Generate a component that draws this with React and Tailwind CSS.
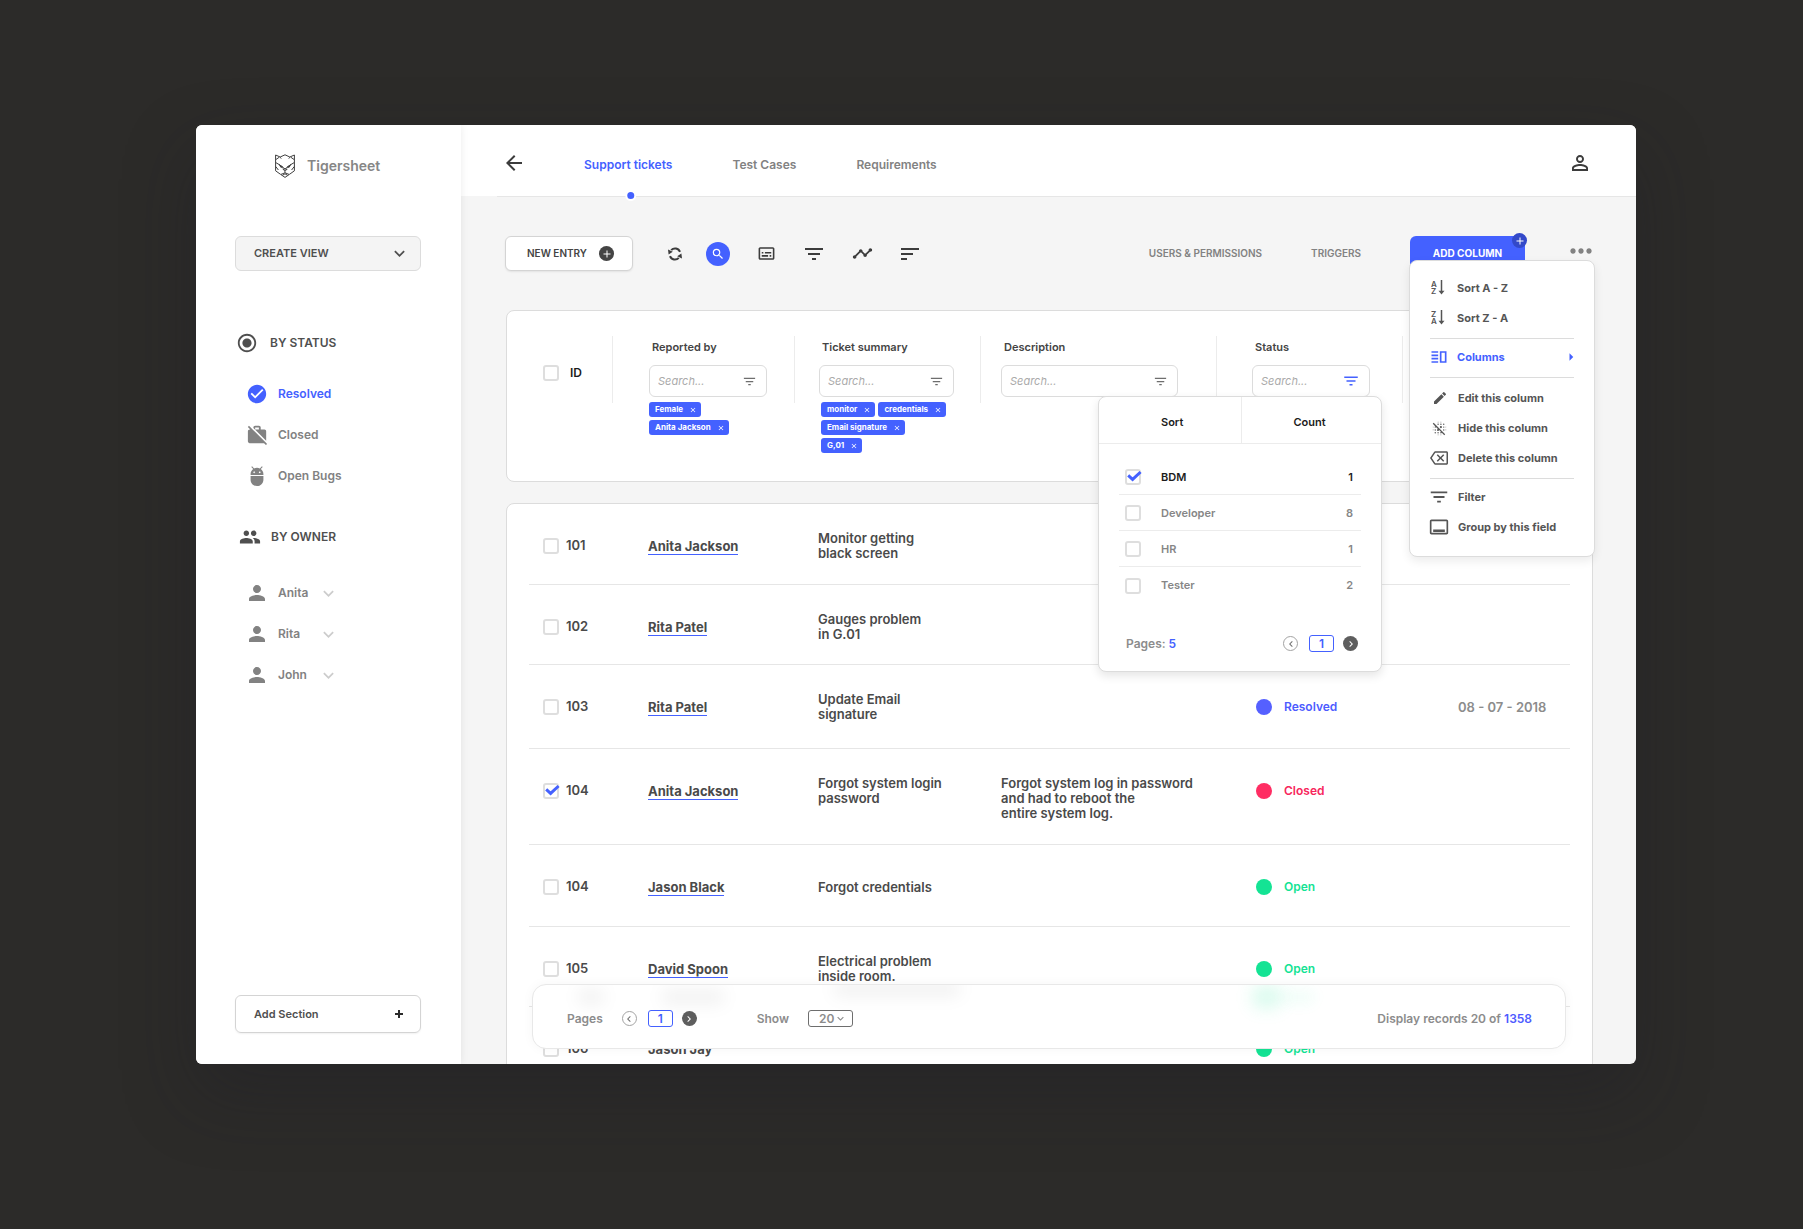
import React, { useState } from 'react';
import {
  MdAdb,
  MdAdd,
  MdArrowBack,
  MdArrowRight,
  MdBlurOff,
  MdCheckCircle,
  MdChevronLeft,
  MdChevronRight,
  MdClose,
  MdEdit,
  MdExpandMore,
  MdFilterList,
  MdGroup,
  MdMoreHoriz,
  MdOutlineBackspace,
  MdOutlineCallToAction,
  MdOutlineSubtitles,
  MdOutlineVerticalSplit,
  MdPerson,
  MdPersonOutline,
  MdRadioButtonChecked,
  MdSearch,
  MdSort,
  MdTimeline,
  MdWorkOff,
} from 'react-icons/md';

const statusLinks = [
  { label: 'Resolved', Icon: MdCheckCircle, active: true },
  { label: 'Closed', Icon: MdWorkOff },
  { label: 'Open Bugs', Icon: MdAdb },
];

const owners = ['Anita', 'Rita', 'John'];

const tabs = ['Support tickets', 'Test Cases', 'Requirements'];

const tools = [
  { label: 'Comments', Icon: MdOutlineSubtitles, size: 'size-[19px]' },
  { label: 'Filter', Icon: MdFilterList, size: 'size-6' },
  { label: 'Chart', Icon: MdTimeline, size: 'size-[21px]' },
  { label: 'Sort', Icon: MdSort, size: 'size-6' },
];

const statusStyles = {
  Resolved: { dot: 'bg-[#5560ff]', text: 'text-[#4d5bff]' },
  Closed: { dot: 'bg-[#ff2d63]', text: 'text-[#f7265c]' },
  Open: { dot: 'bg-[#14e394]', text: 'text-[#14e394]' },
};

const tickets = [
  { key: 1, id: '101', name: 'Anita Jackson', summary: ['Monitor getting', 'black screen'], height: 'h-[80px]' },
  { key: 2, id: '102', name: 'Rita Patel', summary: ['Gauges problem', 'in G.01'], height: 'h-[80px]' },
  { key: 3, id: '103', name: 'Rita Patel', summary: ['Update Email', 'signature'], status: 'Resolved', date: '08 - 07 - 2018', height: 'h-[84px]' },
  {
    key: 4,
    id: '104',
    name: 'Anita Jackson',
    summary: ['Forgot system login', 'password'],
    description: ['Forgot system log in password', 'and had to reboot the', 'entire system log.'],
    status: 'Closed',
    checked: true,
    height: 'h-[96px]',
  },
  { key: 5, id: '104', name: 'Jason Black', summary: ['Forgot credentials'], status: 'Open', height: 'h-[82px]' },
  { key: 6, id: '105', name: 'David Spoon', summary: ['Electrical problem', 'inside room.'], status: 'Open', height: 'h-[80px]' },
  { key: 7, id: '106', name: 'Jason Jay', plain: true, summary: [], status: 'Open', height: 'h-[80px]' },
];

const roles = [
  { label: 'BDM', count: 1, checked: true },
  { label: 'Developer', count: 8 },
  { label: 'HR', count: 1 },
  { label: 'Tester', count: 2 },
];

const TigerLogo = () => (
  <svg viewBox="0 0 20 24" className="h-6 w-5" fill="none" stroke="#3f3f3f" strokeWidth="1" strokeLinejoin="round" aria-hidden="true">
    <path d="M.6 1v15.8l5 3.6L10 23.4l4.4-3 5-3.6V1l-4.6 2L10 .8 5.2 3z" />
    <path d="M.8 5.6 4 3.4M19.2 5.6 16 3.4M4.8 3l1.4 1.6M15.2 3l-1.4 1.6" />
    <path d="m.8 8.6 3.4 2 3.8 2.6 2 2 2-2 3.8-2.6 3.4-2" />
    <path d="m4.4 10.6 3.2 2.6H5.8zM15.6 10.6l-3.2 2.6h1.8z" fill="#3f3f3f" />
    <path d="M.8 12.6 3.4 16M19.2 12.6 16.6 16" />
    <path d="M7.8 15h4.4L10 17.2zM10 17.2v1.6l-4 1.6M10 18.8l4 1.6" />
    <path d="M7.6 21.2 10 19.8l2.4 1.4" />
  </svg>
);

const SyncIcon = () => (
  <svg viewBox="0 0 16 16" className="size-4" fill="none" stroke="currentColor" strokeWidth="2" aria-hidden="true">
    <path d="M4.2 4.2A5.2 5.2 0 0 1 13 5.8M11.8 11.8A5.2 5.2 0 0 1 3 10.2" />
    <path d="M1 3.6 5.8 5.8 1.6 8.6zM15 12.4 10.2 10.2 14.4 7.4z" fill="currentColor" stroke="none" />
  </svg>
);

const SortLettersIcon = ({ first, second }) => (
  <svg viewBox="0 0 16 16" className="size-4" aria-hidden="true">
    <text x="0" y="7" fontSize="8" fontWeight="600" fill="currentColor">{first}</text>
    <text x="0" y="14" fontSize="8" fontWeight="600" fill="currentColor">{second}</text>
    <path d="M10.5 0v12" stroke="currentColor" strokeWidth="1.5" />
    <path d="M7.5 10.8h6l-3 3.8z" fill="currentColor" />
  </svg>
);

const Checkbox = ({ label, defaultChecked = false }) => (
  <span className="relative inline-flex size-4 shrink-0">
    <input
      type="checkbox"
      aria-label={label}
      defaultChecked={defaultChecked}
      className="peer size-4 appearance-none rounded-[3px] border-2 border-[#dedede] bg-white"
    />
    <svg viewBox="0 0 16 16" className="pointer-events-none absolute inset-0 hidden size-4 overflow-visible peer-checked:block" fill="none" stroke="#4461ff" strokeWidth="3" aria-hidden="true">
      <path d="m3.2 6.4 4.4 4 8-7.4" />
    </svg>
  </span>
);

const FilterChip = ({ children }) => (
  <span className="flex h-[15px] items-center gap-[6px] rounded-[3px] bg-[#4461ff] pl-[6px] pr-1 text-[8px] leading-[15px] font-bold text-white">
    {children}
    <button type="button" aria-label={`Remove ${children}`}>
      <MdClose className="size-2" />
    </button>
  </span>
);

const SearchBox = ({ id, active }) => (
  <div className="flex h-8 items-center rounded-md border border-[#dcdcdc] bg-white pl-2 pr-[9px]">
    <input
      id={id}
      type="text"
      placeholder="Search..."
      className="w-full min-w-0 flex-1 text-[11px] italic outline-none placeholder:text-[#aaaaaa]"
    />
    <button type="button" aria-label="Filter options" className={active ? 'text-[#4461ff]' : 'text-[#6e6e6e]'}>
      <MdFilterList className={active ? 'size-[18px]' : 'size-[15px]'} />
    </button>
  </div>
);

const HeaderColumn = ({ id, title, className, active, chips, children }) => (
  <div className="flex min-w-0">
    <div className="h-[67px] w-px shrink-0 bg-[#ececec]" />
    <div className={`relative min-w-0 flex-1 pt-[3px] ${className}`}>
      <label htmlFor={id} className="mb-[10px] block pl-[3px] text-[11px] leading-4 font-semibold text-[#444444]">{title}</label>
      <SearchBox id={id} active={active} />
      {chips}
      {children}
    </div>
  </div>
);

const Pager = () => (
  <div className="flex items-center">
    <button type="button" aria-label="Previous page" className="flex size-[15px] items-center justify-center rounded-full border border-[#a3a3a3] text-[#6e6e6e]">
      <MdChevronLeft className="size-3" />
    </button>
    <button type="button" className="mr-[9px] ml-[11px] h-[17px] w-[25px] rounded-[3px] border border-[#4461ff] text-[12px] leading-[15px] font-semibold text-[#4461ff]">1</button>
    <button type="button" aria-label="Next page" className="flex size-[15px] items-center justify-center rounded-full bg-[#5e5e5e] text-white">
      <MdChevronRight className="size-3" />
    </button>
  </div>
);

const Sidebar = () => (
  <aside className="z-10 flex w-[265px] shrink-0 flex-col bg-white pr-10 pl-[39px] shadow-[0_0_8px_rgba(0,0,0,0.08)]">
    <div className="mt-[29px] flex items-center gap-3 pl-10">
      <TigerLogo />
      <span className="text-[14px] leading-[22px] font-semibold text-[#868686]">Tigersheet</span>
    </div>

    <button type="button" className="mt-[58px] flex h-[35px] w-full items-center justify-between rounded-md border border-[#dcdcdc] bg-[#f4f4f4] pr-[10px] pl-[18px] text-[11px] font-semibold text-[#4f4f4f]">
      CREATE VIEW
      <MdExpandMore className="size-[21px]" />
    </button>

    <h2 className="mt-[60px] flex h-6 items-center gap-3 pl-[1px] text-[12px] font-semibold text-[#4f4f4f]">
      <MdRadioButtonChecked className="size-[22px]" />
      BY STATUS
    </h2>
    <ul className="mt-[29px] space-y-[21px] pl-[11px]">
      {statusLinks.map(({ label, Icon, active }) => (
        <li key={label}>
          <a href="#" className={`flex h-5 items-center gap-[10px] text-[12px] font-semibold ${active ? 'text-[#4461ff]' : 'text-[#828282]'}`}>
            <Icon className="size-[22px]" />
            {label}
          </a>
        </li>
      ))}
    </ul>

    <h2 className="mt-[39px] flex h-6 items-center gap-[10px] pl-1 text-[12px] font-semibold text-[#4f4f4f]">
      <MdGroup className="size-[22px]" />
      BY OWNER
    </h2>
    <ul className="mt-[34px] space-y-[21px] pl-[10px]">
      {owners.map((owner) => (
        <li key={owner}>
          <a href="#" className="flex h-5 items-center gap-[9px] text-[12px] font-semibold text-[#828282]">
            <MdPerson className="size-6" />
            <span className="w-[31px]">{owner}</span>
            <MdExpandMore className="size-[21px] text-[#cccccc]" />
          </a>
        </li>
      ))}
    </ul>

    <button type="button" className="mt-auto mb-[31px] flex h-[38px] w-full items-center justify-between rounded-md border border-[#d4d4d4] pr-[14px] pl-[18px] text-[11px] font-semibold text-[#4f4f4f] shadow-[0_1px_2px_rgba(0,0,0,0.06)]">
      Add Section
      <svg viewBox="0 0 14 14" className="size-[14px]" stroke="#2b2b2b" strokeWidth="2" aria-hidden="true">
        <path d="M7 3v8M3 7h8" />
      </svg>
    </button>
  </aside>
);

const ColumnMenu = () => {
  const item = 'flex h-[30px] w-full items-center gap-[10px] pl-px text-[11px] font-bold';
  return (
    <div className="absolute top-6 -left-px w-[186px] rounded-lg border border-[#dcdcdc] bg-white px-5 pt-3 pb-[14px] text-[#555555] shadow-[0_4px_10px_rgba(0,0,0,0.08)]">
      <button type="button" className={item}><SortLettersIcon first="A" second="Z" />Sort A - Z</button>
      <button type="button" className={item}><SortLettersIcon first="Z" second="A" />Sort Z - A</button>
      <hr className="mt-[5px] mb-[3px] border-[#dcdcdc]" />
      <button type="button" className={`${item} text-[#4461ff]`}>
        <MdOutlineVerticalSplit className="-mx-0.5 size-5" />
        Columns
        <MdArrowRight className="-mr-[6px] ml-auto size-[18px]" />
      </button>
      <hr className="my-[5px] border-[#dcdcdc]" />
      <button type="button" className={item}><MdEdit className="ml-px size-4" />Edit this column</button>
      <button type="button" className={item}><MdBlurOff className="size-[17px]" />Hide this column</button>
      <button type="button" className={item}><MdOutlineBackspace className="-ml-px size-[18px]" />Delete this column</button>
      <hr className="mt-[5px] mb-[3px] border-[#dcdcdc]" />
      <button type="button" className={item}><MdFilterList className="-mr-[2px] -ml-[3px] size-[22px]" />Filter</button>
      <button type="button" className={item}><MdOutlineCallToAction className="-mr-px -ml-[2px] size-5" />Group by this field</button>
    </div>
  );
};

const Toolbar = () => (
  <div className="relative z-20 flex h-[35px] items-center text-[#3c3c3c]">
    <button type="button" className="-ml-px flex h-[35px] items-center gap-3 rounded-md border border-[#d4d4d4] bg-white pr-[18px] pl-[21px] text-[10px] font-semibold text-[#444444] shadow-[0_1px_2px_rgba(0,0,0,0.08)]">
      NEW ENTRY
      <span className="flex size-[15px] items-center justify-center rounded-full bg-[#444444] text-white">
        <MdAdd className="size-3" />
      </span>
    </button>
    <button type="button" aria-label="Refresh" className="ml-[30px] flex size-6 items-center justify-center"><SyncIcon /></button>
    <div className="ml-[19px] flex items-center gap-6">
      <button type="button" aria-label="Search" className="flex size-6 items-center justify-center rounded-full bg-[#4461ff] text-white">
        <MdSearch className="size-[14px]" />
      </button>
      {tools.map(({ label, Icon, size }) => (
        <button key={label} type="button" aria-label={label} className="flex size-6 items-center justify-center">
          <Icon className={size} />
        </button>
      ))}
    </div>

    <div className="ml-auto flex items-center text-[10px] font-semibold text-[#828282]">
      <a href="#" className="mr-[49px]">USERS &amp; PERMISSIONS</a>
      <a href="#" className="mr-[49px]">TRIGGERS</a>
      <div className="relative">
        <button type="button" className="h-[35px] w-[115px] rounded-md bg-[#4461ff] font-bold text-white">ADD COLUMN</button>
        <span className="absolute -top-[3px] -right-[2px] flex size-[15px] items-center justify-center rounded-full bg-[#3349c9] text-white">
          <MdAdd className="size-3" />
        </span>
        <ColumnMenu />
      </div>
      <button type="button" aria-label="More" className="-mr-1 mb-[6px] ml-10"><MdMoreHoriz className="size-8" /></button>
    </div>
  </div>
);

const StatusPopover = () => (
  <div className="absolute top-[60px] right-5 w-[284px] rounded-lg border border-[#dcdcdc] bg-white text-[11px] font-semibold shadow-[0_4px_10px_rgba(0,0,0,0.1)]">
    <div className="flex h-[47px] border-b border-[#ececec] leading-[50px] text-[#1c1c1c]">
      <div className="w-[143px] border-r border-[#ececec] pl-[62px]">Sort</div>
      <div className="flex-1 pr-1 text-center">Count</div>
    </div>
    <ul className="mt-[15px] px-5">
      {roles.map((role) => (
        <li key={role.label} className={`flex h-9 items-center border-b border-[#ececec] pt-px pr-2 pl-[6px] last:border-0 ${role.checked ? 'text-[#1c1c1c]' : 'text-[#868686]'}`}>
          <Checkbox label={role.label} defaultChecked={role.checked} />
          <span className="ml-5 flex-1">{role.label}</span>
          <span>{role.count}</span>
        </li>
      ))}
    </ul>
    <div className="flex items-center justify-between pt-8 pr-[23px] pb-[19px] pl-[27px] text-[12px] leading-[17px] text-[#8c8c8c]">
      <span>Pages: <span className="text-[#4461ff]">5</span></span>
      <Pager />
    </div>
  </div>
);

const FilterHeader = () => (
  <section className="relative z-10 mt-[39px] grid grid-cols-[105fr_182fr_186fr_236fr_186fr_190fr] rounded-lg border border-[#dcdcdc] bg-white pt-[25px] pb-7">
    <div className="flex h-[67px] items-center gap-[11px] pt-[6px] pl-9 text-[12px] font-semibold text-[#1c1c1c]">
      <Checkbox label="Select all" />
      ID
    </div>
    <HeaderColumn
      id="reported"
      title="Reported by"
      className="pr-[27px] pl-9"
      chips={
        <div className="mt-[5px] flex flex-col items-start gap-[3px]">
          <FilterChip>Female</FilterChip>
          <FilterChip>Anita Jackson</FilterChip>
        </div>
      }
    />
    <HeaderColumn
      id="summary"
      title="Ticket summary"
      className="pr-[26px] pl-6"
      chips={
        <div className="mt-[5px] flex flex-col items-start gap-[3px] pl-[2px] whitespace-nowrap">
          <div className="flex gap-[3px]">
            <FilterChip>monitor</FilterChip>
            <FilterChip>credentials</FilterChip>
          </div>
          <FilterChip>Email signature</FilterChip>
          <FilterChip>G,01</FilterChip>
        </div>
      }
    />
    <HeaderColumn id="description" title="Description" className="pr-[38px] pl-5" />
    <HeaderColumn id="status" title="Status" className="pr-8 pl-[35px]" active>
      <StatusPopover />
    </HeaderColumn>
    <div className="h-[67px] w-px bg-[#ececec]" />
  </section>
);

const TicketTable = () => (
  <section className="mt-[21px] rounded-t-lg border border-[#dcdcdc] bg-white px-[22px]">
    <table className="w-full table-fixed text-left text-[13px] font-semibold text-[#4a4a4a]">
      <colgroup>
        <col className="w-[119px]" />
        <col className="w-[170px]" />
        <col className="w-[183px]" />
        <col className="w-[255px]" />
        <col className="w-[202px]" />
        <col className="w-[112px]" />
      </colgroup>
      <tbody>
        {tickets.map((ticket) => (
          <tr key={ticket.key} className={`border-b border-[#e6e6e6] align-top ${ticket.height}`}>
            <td className="pt-8 pl-[14px]">
              <div className="flex h-5 items-center gap-[7px]">
                <Checkbox label={`Select ticket ${ticket.id}`} defaultChecked={ticket.checked} />
                {ticket.id}
              </div>
            </td>
            <td className="pt-[33px]">
              <a href="#" className={`inline-block leading-[15px] font-bold ${ticket.plain ? '' : 'border-b border-[#4461ff]'}`}>{ticket.name}</a>
            </td>
            <td className={ticket.summary.length > 1 ? 'pt-[27px] leading-[15px]' : 'pt-[35px] leading-[15px]'}>
              {ticket.summary.map((line) => <div key={line}>{line}</div>)}
            </td>
            <td className="pt-[27px] leading-[15px]">
              {ticket.description?.map((line) => <div key={line}>{line}</div>)}
            </td>
            <td className="pt-8 text-[12px]">
              {ticket.status && (
                <div className={`flex h-5 items-center gap-3 ${statusStyles[ticket.status].text}`}>
                  <span className={`size-4 rounded-full ${statusStyles[ticket.status].dot}`} />
                  {ticket.status}
                </div>
              )}
            </td>
            <td className="pt-8 leading-5 whitespace-nowrap text-[#8c8c8c]">{ticket.date}</td>
          </tr>
        ))}
      </tbody>
    </table>
  </section>
);

const FooterBar = () => {
  const [pageSize, setPageSize] = useState('20');

  return (
    <footer className="absolute right-[70px] bottom-[15px] left-[71px] z-10 flex h-[65px] items-center overflow-hidden rounded-[14px] border border-[#e8e8e8] bg-white pt-1 pr-[33px] pl-[34px] text-[12px] font-semibold text-[#8c8c8c] shadow-[0_0_12px_rgba(0,0,0,0.04)]">
      {/* frosted traces of the row behind the bar */}
      <div aria-hidden="true" className="pointer-events-none absolute inset-0">
        <div className="absolute top-1 left-11 h-4 w-7 rounded-full bg-black/5 blur-[8px]" />
        <div className="absolute top-1 left-32 h-4 w-16 rounded-full bg-black/5 blur-[8px]" />
        <div className="absolute -top-1 left-[300px] h-4 w-32 rounded-full bg-black/5 blur-[8px]" />
        <div className="absolute top-0 left-[718px] h-6 w-8 rounded-full bg-[#14e394]/15 blur-[8px]" />
        <div className="absolute top-1 left-[750px] h-4 w-8 rounded-full bg-[#14e394]/5 blur-[6px]" />
      </div>
      <span className="mr-[19px]">Pages</span>
      <Pager />
      <label htmlFor="page-size" className="mr-[19px] ml-[60px]">Show</label>
      <div className="relative">
        <select
          id="page-size"
          value={pageSize}
          onChange={(e) => setPageSize(e.target.value)}
          className="block h-[17px] w-[45px] appearance-none rounded-[3px] border border-[#6e6e6e] pl-[10px] text-[12px] leading-[15px]"
        >
          <option>20</option>
          <option>50</option>
        </select>
        <MdExpandMore className="pointer-events-none absolute top-[2px] right-[6px] size-[13px]" />
      </div>
      <span className="ml-auto">Display records 20 of <span className="text-[#4d5bff]">1358</span></span>
    </footer>
  );
};

export default function App() {
  const [activeTab, setActiveTab] = useState('Support tickets');

  return (
    <div className="h-screen bg-[#2c2b29] pt-[125px] pr-[167px] pb-[165px] pl-[196px] font-['Inter',sans-serif]">
      <div className="flex h-full overflow-hidden rounded-md bg-[#f5f5f5] shadow-[0_30px_70px_rgba(30,30,36,0.35)]">
        <Sidebar />
        <main className="relative min-w-0 flex-1">
          <header className="flex h-[71px] items-center bg-white pt-1 pr-11 pl-[41px]">
            <button type="button" aria-label="Back" className="text-[#3c3c3c]"><MdArrowBack className="size-6" /></button>
            <nav className="ml-[58px] flex h-full gap-[60px] text-[12px] font-semibold">
              {tabs.map((tab) => (
                <a
                  key={tab}
                  href="#"
                  onClick={() => setActiveTab(tab)}
                  className={`relative flex h-full items-center pt-1 ${tab === activeTab ? 'text-[#4461ff]' : 'text-[#828282]'}`}
                >
                  {tab}
                  {tab === activeTab && (
                    <span className="absolute -bottom-[5px] left-1/2 size-[11px] -translate-x-1/4 rounded-full border-2 border-white bg-[#4461ff]" />
                  )}
                </a>
              ))}
            </nav>
            <button type="button" aria-label="Account" className="ml-auto text-[#3c3c3c]"><MdPersonOutline className="size-6" /></button>
          </header>
          <hr className="ml-9 border-[#e6e6e6]" />
          <div className="pt-[39px] pr-[43px] pl-[45px]">
            <Toolbar />
            <FilterHeader />
            <TicketTable />
          </div>
          <FooterBar />
        </main>
      </div>
    </div>
  );
}
